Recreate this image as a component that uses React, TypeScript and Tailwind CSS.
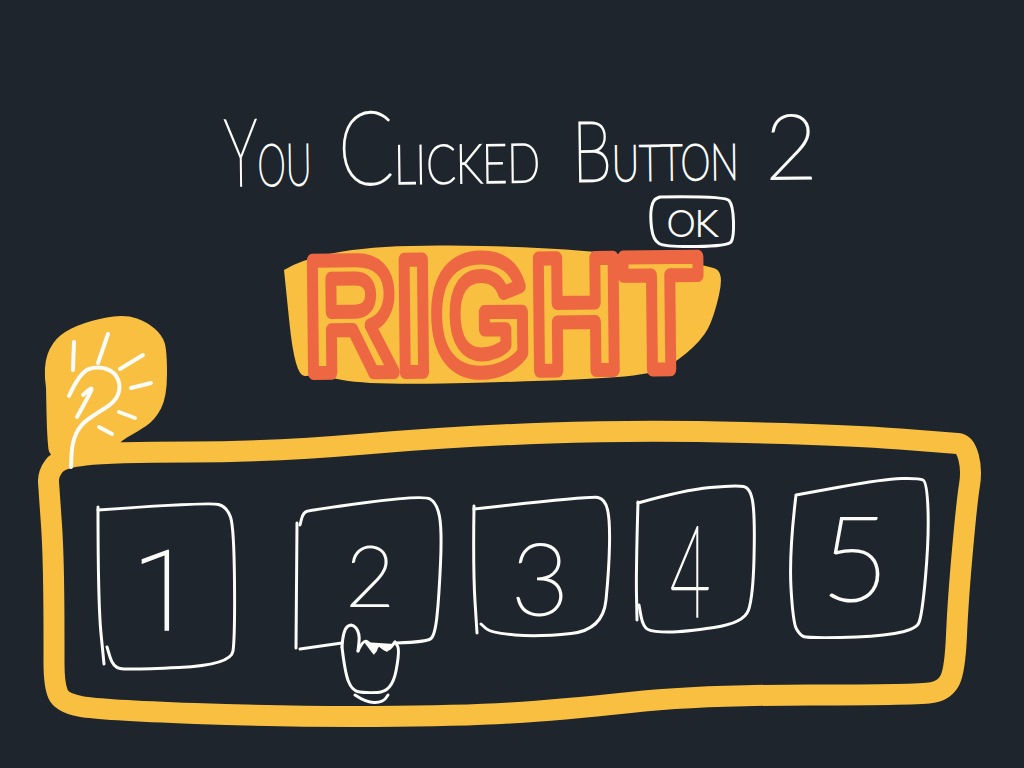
const YELLOW = '#f9bf41'
const WHITE = '#fbfbf8'

type Pt = [number, number]

// runs a soft line through the points, the way a pen would
function pen(points: Pt[]) {
  let d = `M${points[0][0]} ${points[0][1]}`
  for (let i = 1; i < points.length - 1; i++) {
    const [x, y] = points[i]
    const [nx, ny] = points[i + 1]
    d += ` Q${x} ${y} ${(x + nx) / 2} ${(y + ny) / 2}`
  }
  const last = points[points.length - 1]
  return d + ` L${last[0]} ${last[1]}`
}

const frame: Pt[] = [[54, 640], [54, 560], [49, 490], [48, 474], [60, 458], [110, 452], [270, 452], [460, 436], [640, 430], [850, 435], [950, 443], [965, 444], [972, 470], [967, 500], [958, 600], [955, 670], [945, 690], [920, 695], [700, 695], [560, 710], [460, 716], [290, 717], [100, 710], [62, 703], [54, 685], [54, 640]]

const bulbBlob: Pt[] = [[46, 388], [43, 367], [52, 342], [70, 328], [100, 318], [127, 315], [147, 322], [162, 335], [167, 350], [167, 397], [155, 420], [137, 432], [117, 443], [117, 462], [50, 462], [47, 437], [46, 388]]

const rightBlob: Pt[] = [[284, 270], [303, 258], [382, 245], [516, 246], [615, 253], [708, 265], [724, 273], [714, 317], [702, 340], [670, 367], [635, 377], [516, 382], [370, 385], [315, 375], [295, 377], [284, 270]]

const whiteLines: Pt[][] = [
  // button 1
  [[98, 507], [98, 603], [104, 664]],
  [[98, 510], [210, 502], [227, 507], [234, 527], [235, 637], [231, 665], [127, 670], [113, 667], [107, 647]],
  // button 2
  [[297, 523], [296, 648]],
  [[300, 649], [342, 643]],
  [[397, 643], [427, 642], [435, 635], [439, 597], [442, 530], [437, 503], [423, 495], [310, 510], [303, 513], [300, 525]],
  // button 3
  [[474, 506], [473, 570], [477, 633]],
  [[474, 509], [591, 496], [605, 499], [610, 520], [609, 570], [603, 630], [539, 637], [491, 633], [481, 624]],
  // button 4
  [[638, 502], [636, 570], [637, 620]],
  [[638, 503], [684, 490], [736, 485], [751, 488], [755, 520], [753, 597], [744, 623], [684, 632], [653, 632], [643, 627], [639, 605]],
  // button 5
  [[796, 495], [789, 553], [793, 623], [800, 635], [807, 638], [874, 637], [915, 630], [922, 617], [929, 537], [927, 482], [919, 478], [884, 479], [796, 495]],
  // hand
  [[342, 647], [343, 630], [352, 623], [360, 633], [358, 651]],
  [[342, 647], [345, 673], [352, 690], [363, 693], [392, 692], [400, 650], [395, 642]],
  [[358, 651], [363, 640], [370, 643], [374, 655], [378, 643], [387, 652], [395, 642]],
  [[355, 695], [367, 703], [383, 702], [388, 695]],
  // ok box
  [[660, 197], [725, 196], [733, 205], [734, 238], [728, 246], [665, 247], [653, 240], [650, 215], [653, 200], [660, 197]],
]

const bulbLines: Pt[][] = [
  [[69, 396], [80, 372], [98, 366], [115, 372], [121, 387], [115, 402], [97, 413], [80, 425], [72, 443], [71, 467]],
  [[77, 417], [91, 392], [92, 387], [83, 395]],
  [[74, 342], [73, 370]],
  [[108, 334], [98, 363]],
  [[143, 355], [120, 369]],
  [[151, 383], [131, 388]],
  [[119, 412], [135, 418]],
  [[99, 427], [112, 434]],
]

function Sketch() {
  return (
    <svg className="absolute inset-0" width="1024" height="768" viewBox="0 0 1024 768" fill="none" strokeLinecap="round" strokeLinejoin="round">
      <path d={pen(bulbBlob)} fill={YELLOW} />
      <path d={pen(rightBlob)} fill={YELLOW} />
      <text transform="translate(305 373) rotate(-0.6) scale(0.78 1)" fontFamily="'Liberation Sans', sans-serif" fontWeight="700" fontSize="163" stroke="#ee6743" strokeWidth="14">RIGHT</text>
      <path d={pen(frame)} stroke={YELLOW} strokeWidth="21" />
      {whiteLines.map((p, i) => <path key={i} d={pen(p)} stroke={WHITE} strokeWidth="3" />)}
      {bulbLines.map((p, i) => <path key={i} d={pen(p)} stroke={WHITE} strokeWidth="4" />)}
      <path d="M364 642 L370 650 L374 655 L378 646 L387 652 L394 644 Z" fill={WHITE} />
    </svg>
  )
}

export default function App() {
  return (
    <div className="relative w-[1024px] h-[768px] overflow-hidden bg-[#1e252c] text-[#fbfbf8] font-['Lato','Open_Sans',sans-serif] font-thin [-webkit-text-stroke:2px_#fbfbf8]">
      <Sketch />

      <div className="relative flex flex-col pt-[99px]">
        <h1 className="flex items-baseline h-[97px] pl-[224px] origin-left -rotate-[0.75deg] font-thin leading-none">
          <span className="w-[114px] flex items-baseline origin-left scale-x-[0.62]">
            <span className="text-[94px]">Y</span><span className="text-[58px]">OU</span>
          </span>
          <span className="w-[234px] flex items-baseline origin-left scale-x-[0.8]">
            <span className="text-[102px]">C</span><span className="text-[54px]">LICKED</span>
          </span>
          <span className="w-[193px] flex items-baseline origin-left scale-x-[0.76]">
            <span className="text-[84px]">B</span><span className="text-[50px]">UTTON</span>
          </span>
          <span className="text-[90px]">2</span>
        </h1>

        <div className="flex justify-end pr-[290px]">
          <button className="w-[84px] h-[51px] flex items-center justify-center text-[36px] leading-none font-thin">OK</button>
        </div>

        <div className="flex items-start mt-[243px] pl-[98px] leading-none">
          <button className="w-[130px] h-[128px] mt-[38px] flex items-center justify-center text-[112px] font-thin font-['Roboto',sans-serif] [-webkit-text-stroke:1.5px_#fbfbf8]">1</button>
          <button className="w-[148px] h-[128px] ml-[68px] mt-[20px] flex items-center justify-center text-[84px] font-thin">2</button>
          <button className="w-[136px] h-[128px] ml-[28px] mt-[22px] flex items-center justify-center text-[100px] font-thin">3</button>
          <button className="w-[104px] h-[128px] ml-[30px] mt-[14px] flex items-center justify-center text-[128px] font-thin"><span className="scale-x-[0.55]">4</span></button>
          <button className="w-[130px] h-[128px] ml-[48px] mt-[2px] flex items-center justify-center text-[118px] font-thin">5</button>
        </div>
      </div>
    </div>
  )
}
